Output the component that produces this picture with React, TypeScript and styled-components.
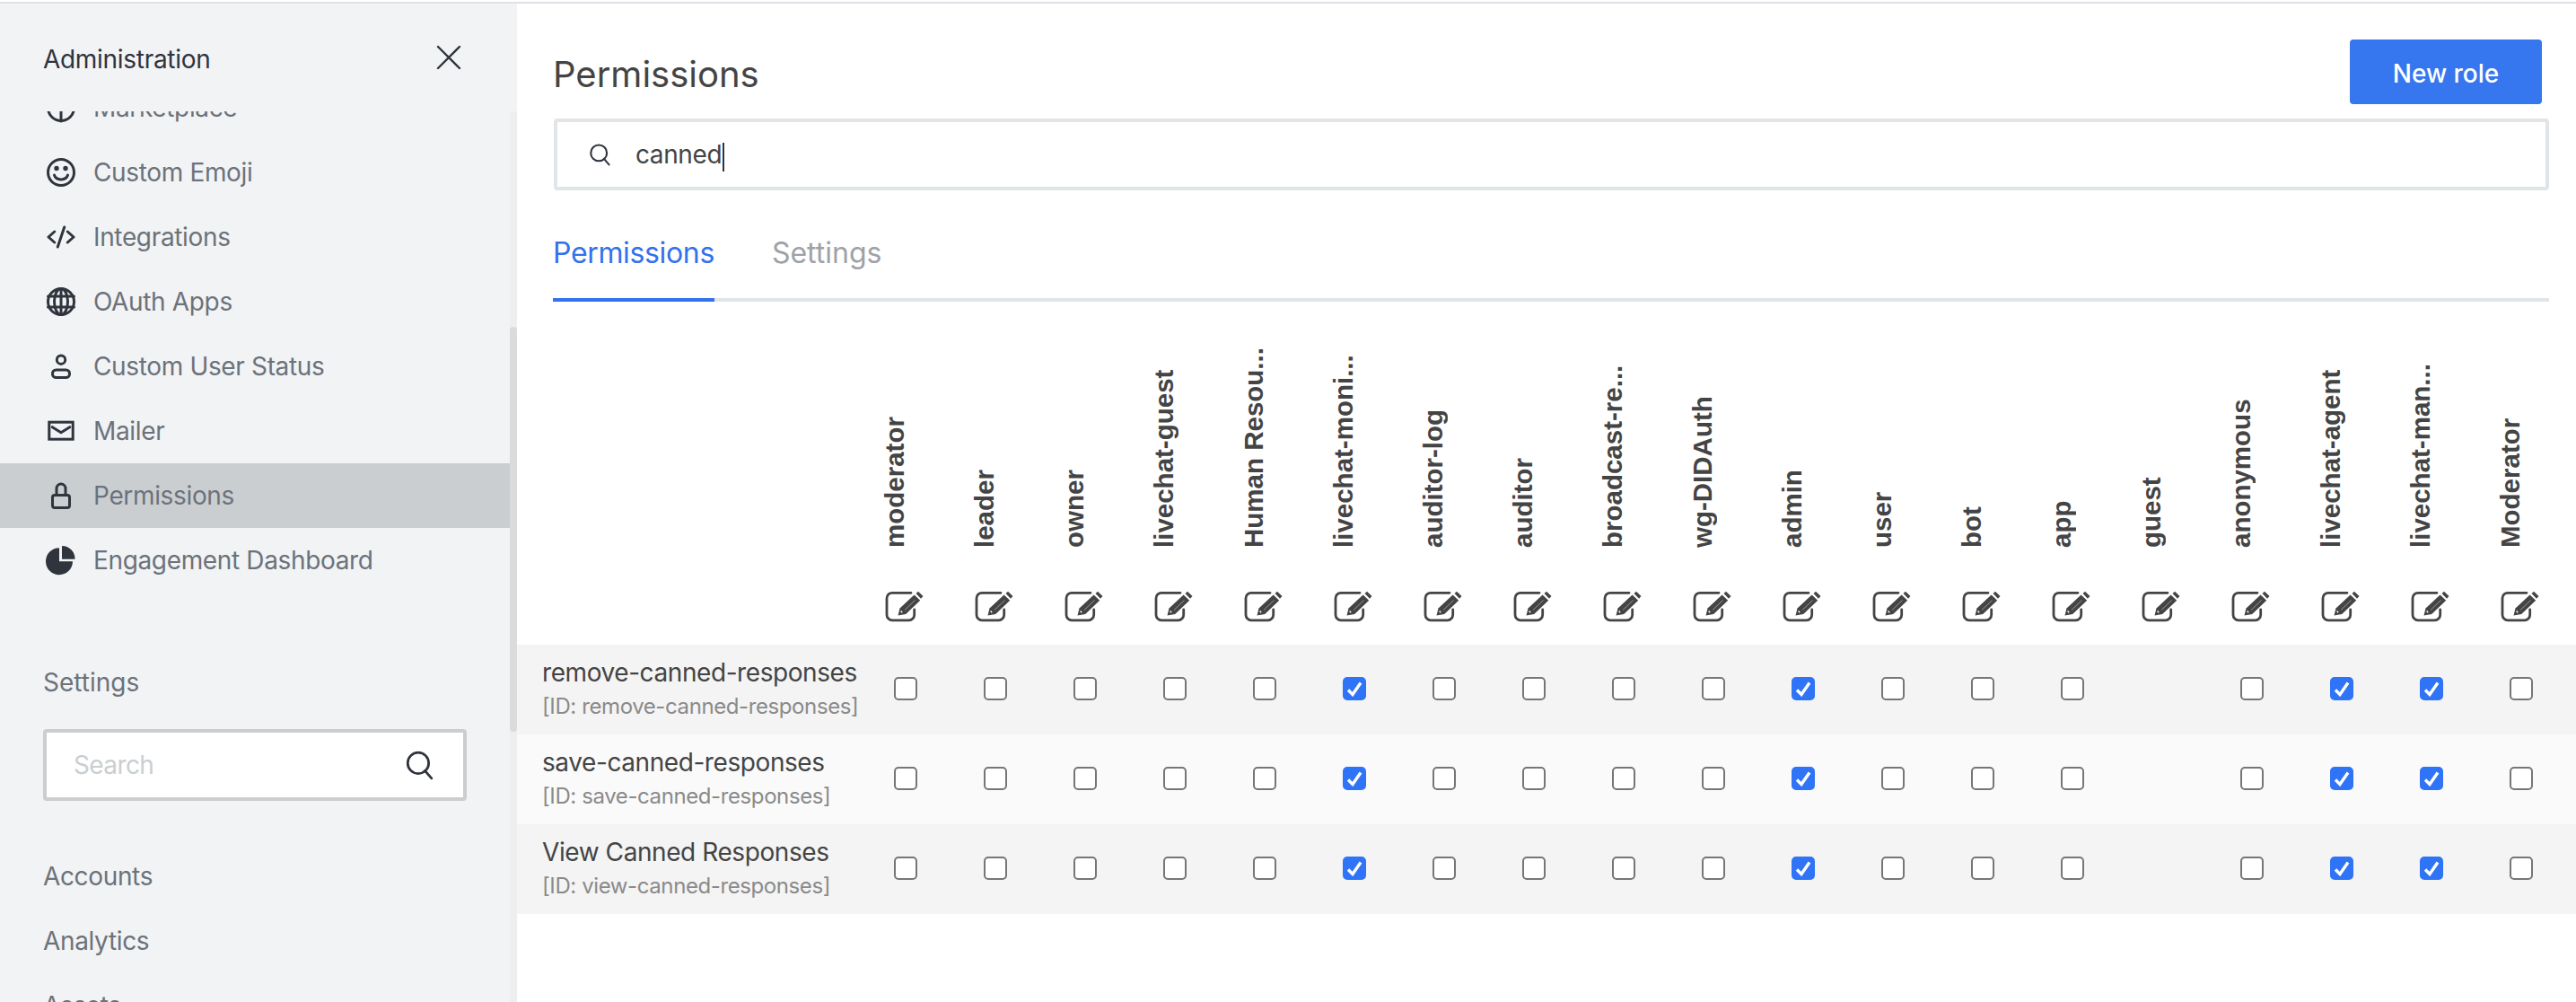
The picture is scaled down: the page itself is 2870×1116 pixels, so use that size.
import React from 'react'
import styled, { createGlobalStyle } from 'styled-components'

const GlobalStyle = createGlobalStyle`
  html, body {
    margin: 0;
    padding: 0;
    background: #fff;
    overflow: hidden;
  }
  * {
    box-sizing: border-box;
  }
`

const Page = styled.div`
  width: 2870px;
  height: 1116px;
  display: flex;
  flex-direction: column;
  overflow: hidden;
  padding-top: 2px;
  font-family: Inter, 'Liberation Sans', sans-serif;
`

const TopLine = styled.div`
  height: 2px;
  flex: none;
  background: #e0e0e6;
`

const Body = styled.div`
  flex: 1;
  min-height: 0;
  display: flex;
`

const Sidebar = styled.aside`
  width: 576px;
  flex: none;
  background: #f2f3f5;
  display: flex;
  flex-direction: column;
`

const SidebarHeader = styled.div`
  height: 120px;
  flex: none;
  padding: 4px 62px 0 48px;
  display: flex;
  align-items: center;
  justify-content: space-between;
  font-size: 28px;
  letter-spacing: -0.3px;
  color: #2f343d;

  svg {
    margin-top: -4px;
  }
`

const SidebarScroll = styled.div`
  flex: 1;
  min-height: 0;
  position: relative;
  overflow: hidden;
`

const SidebarContent = styled.div`
  margin-top: -40px;
  padding-right: 8px;
`

const Track = styled.div`
  position: absolute;
  top: 0;
  right: 0;
  bottom: 0;
  width: 8px;
  background: #eceef0;
`

const Thumb = styled.div`
  position: absolute;
  top: 240px;
  height: 451px;
  left: 0;
  right: 0;
  background: #d9dbdc;
  border-radius: 4px;
`

const NavRow = styled.div<{ $active?: boolean }>`
  height: 72px;
  display: flex;
  align-items: center;
  padding-left: 48px;
  gap: 17px;
  font-size: 28px;
  letter-spacing: -0.35px;
  color: #6c727a;
  background: ${(p) => (p.$active ? '#cbced1' : 'transparent')};
`

const NavIcon = styled.svg`
  width: 38px;
  height: 38px;
  flex: none;
  margin-left: 1px;
  fill: none;
  stroke: #2f343d;
  stroke-width: 3;
  stroke-linecap: round;
  stroke-linejoin: round;
`

const SectionLabel = styled.div`
  height: 40px;
  margin: 80px 0 32px 48px;
  display: flex;
  align-items: center;
  font-size: 28px;
  color: #6c727a;
`

const SideSearch = styled.div`
  width: 472px;
  height: 80px;
  margin: 0 0 48px 48px;
  padding: 0 32px 0 30px;
  display: flex;
  align-items: center;
  justify-content: space-between;
  background: #fff;
  border: 4px solid #cbced1;
  border-radius: 4px;
  font-size: 28px;
  letter-spacing: -0.6px;
  color: #cbced1;
`

const SettingsLink = styled.div`
  height: 72px;
  padding-left: 48px;
  display: flex;
  align-items: center;
  font-size: 28px;
  letter-spacing: -0.35px;
  color: #6c727a;
`

const Main = styled.main`
  flex: 1;
  min-width: 0;
  display: flex;
  flex-direction: column;
`

const Head = styled.div`
  height: 128px;
  flex: none;
  margin: 0 38px 0 40px;
  padding-top: 40px;
  display: flex;
  align-items: flex-start;
  justify-content: space-between;
`

const Title = styled.h1`
  margin: 0;
  padding-top: 15px;
  font-size: 40px;
  line-height: 48px;
  font-weight: 400;
  color: #444;
`

const PrimaryButton = styled.button`
  width: 214px;
  height: 72px;
  padding: 3px 0 0;
  border: 0;
  border-radius: 4px;
  background: #3676ee;
  color: #fff;
  font: 500 28px Inter, sans-serif;
`

const SearchField = styled.div`
  height: 80px;
  flex: none;
  margin: 0 30px 0 41px;
  padding: 0 34px;
  display: flex;
  align-items: center;
  gap: 27px;
  border: 4px solid #e1e5e8;
  border-radius: 4px;
  font-size: 28px;
  letter-spacing: -0.4px;
  color: #444;

  span {
    padding-top: 2px;
  }
`

const Caret = styled.span`
  display: inline-block;
  width: 2px;
  height: 32px;
  margin-left: 1px;
  padding: 0;
  vertical-align: middle;
  background: #2f343d;
`

const Tabs = styled.div`
  height: 120px;
  flex: none;
  margin: 4px 30px 0 40px;
  display: flex;
  gap: 64px;
  border-bottom: 4px solid #e1e5e8;
`

const Tab = styled.div<{ $active?: boolean }>`
  height: 120px;
  padding-top: 46px;
  font-size: 32px;
  line-height: 40px;
  letter-spacing: ${(p) => (p.$active ? '-0.35px' : '0')};
  color: ${(p) => (p.$active ? '#3371ed' : '#9ea2a8')};
  border-bottom: ${(p) => (p.$active ? '4px solid #3371ed' : '0')};
`

const Table = styled.div`
  flex: none;
  display: flex;
  flex-direction: column;
`

const HeaderRow = styled.div`
  height: 382px;
  display: flex;
`

const RoleColumn = styled.div`
  width: 100px;
  flex: none;
  display: flex;
  flex-direction: column;
  align-items: center;
`

const RoleLabel = styled.div`
  height: 274px;
  padding-left: 24px;
  display: flex;
  writing-mode: vertical-rl;
  transform: rotate(180deg);
  justify-content: flex-start;
  white-space: nowrap;
  font: 700 29.5px 'Liberation Sans', Arial, sans-serif;
  color: #444;
`

const EditIcon = styled.svg`
  width: 44px;
  height: 36px;
  margin-top: 48px;
  margin-left: -2px;
  flex: none;
`

const NameCell = styled.div`
  width: 383px;
  flex: none;
  padding-left: 28px;
  white-space: nowrap;
`

const Row = styled.div<{ $shade: string }>`
  height: 100px;
  display: flex;
  align-items: center;
  background: ${(p) => p.$shade};
`

const PermName = styled.div`
  font-size: 28px;
  line-height: 36px;
  letter-spacing: -0.42px;
  margin-top: -2px;
  color: #444;
`

const PermId = styled.div`
  font-size: 24px;
  line-height: 32px;
  letter-spacing: -0.4px;
  margin-top: 4px;
  color: #8a8a8a;
`

const CheckCell = styled.div`
  width: 100px;
  flex: none;
  margin-top: -3px;
  display: flex;
  justify-content: center;
`

const Box = styled.div<{ $checked?: boolean }>`
  width: 26px;
  height: 26px;
  border-radius: 5px;
  border: 2px solid ${(p) => (p.$checked ? '#2f74f7' : '#767676')};
  background: ${(p) => (p.$checked ? '#2f74f7' : '#fff')};
  display: flex;
  align-items: center;
  justify-content: center;
`

const roles = [
  'moderator',
  'leader',
  'owner',
  'livechat-guest',
  'Human Resou...',
  'livechat-moni...',
  'auditor-log',
  'auditor',
  'broadcast-re...',
  'wg-DIDAuth',
  'admin',
  'user',
  'bot',
  'app',
  'guest',
  'anonymous',
  'livechat-agent',
  'livechat-man...',
  'Moderator',
]

const checkedRoles = ['livechat-moni...', 'admin', 'livechat-agent', 'livechat-man...']

const permissions = [
  { name: 'remove-canned-responses', id: 'remove-canned-responses', shade: '#f4f4f4' },
  { name: 'save-canned-responses', id: 'save-canned-responses', shade: '#fafafa' },
  { name: 'View Canned Responses', id: 'view-canned-responses', shade: '#f4f4f4' },
]

const SearchGlyph = ({ size }: { size: number }) => (
  <svg width={size} height={size} viewBox="0 0 32 32" fill="none" stroke="#2f343d" strokeWidth="2.6">
    <circle cx="15" cy="14" r="11" />
    <path d="M22 22l7 8" strokeLinecap="round" />
  </svg>
)

const EditGlyph = () => (
  <EditIcon viewBox="0 0 44 36">
    <path
      d="M29 2.3H8a6 6 0 0 0-6 6v18.5a6 6 0 0 0 6 6h18.7a6 6 0 0 0 6-6v-6"
      fill="none"
      stroke="#444"
      strokeWidth="2.8"
      strokeLinecap="round"
    />
    <path d="M34.5 3l2.5-2.2 5.5 5.2-2.5 2.8z" fill="#444" />
    <path d="M32.6 4.5l6.6 6.2L23.2 26l-8.7 1.4 2-8z" fill="#444" />
    <path d="M19.2 24.2l-1.6-1.6" stroke="#fff" strokeWidth="1.4" fill="none" />
    <path d="M22 21.5L33.5 10.5" stroke="#bbb" strokeWidth="0.7" fill="none" />
  </EditIcon>
)

const navIcons: Record<string, React.ReactNode> = {
  market: (
    <>
      <circle cx="19" cy="19" r="14.5" />
      <path d="M19 4v30" />
    </>
  ),
  emoji: (
    <>
      <circle cx="19" cy="19" r="14.5" />
      <path d="M11.5 22c2 6.5 13 6.5 15 0" />
      <circle cx="14" cy="14.5" r="1.2" fill="#2f343d" />
      <circle cx="24" cy="14.5" r="1.2" fill="#2f343d" />
    </>
  ),
  code: <path d="M11.7 13L5 19l6.7 6M26.3 13l6.7 6-6.7 6M22.7 8l-7.4 22" />,
  globe: (
    <>
      <circle cx="19" cy="19" r="14.5" />
      <ellipse cx="19" cy="19" rx="7.5" ry="14.5" />
      <path d="M4.5 13h29M4.5 25h29M19 4.5v29" />
    </>
  ),
  user: (
    <>
      <circle cx="19" cy="11.7" r="4.7" />
      <rect x="9.5" y="23" width="19" height="8.5" rx="4" />
    </>
  ),
  mail: (
    <>
      <rect x="5.8" y="9.2" width="26.4" height="19" strokeLinejoin="miter" />
      <path d="M9.3 14.7l9.7 6 9.7-6" />
    </>
  ),
  lock: (
    <>
      <rect x="9.5" y="18.5" width="19" height="14" rx="2.5" />
      <path d="M14 18.5V11a5 5 0 0 1 10 0v7.5" />
    </>
  ),
  pie: (
    <>
      <path d="M17 5.2A15 15 0 1 0 32 20.3H17z" fill="#2f343d" stroke="none" />
      <path d="M20 3a14.5 14.5 0 0 1 14.5 14.7H20z" fill="#2f343d" stroke="none" />
    </>
  ),
}

const navItems = [
  { icon: 'market', label: 'Marketplace' },
  { icon: 'emoji', label: 'Custom Emoji' },
  { icon: 'code', label: 'Integrations' },
  { icon: 'globe', label: 'OAuth Apps' },
  { icon: 'user', label: 'Custom User Status' },
  { icon: 'mail', label: 'Mailer' },
  { icon: 'lock', label: 'Permissions', active: true },
  { icon: 'pie', label: 'Engagement Dashboard' },
]

export default function App() {
  return (
    <Page>
      <GlobalStyle />
      <TopLine />
      <Body>
        <Sidebar>
          <SidebarHeader>
            Administration
            <svg width="28" height="28" viewBox="0 0 28 28" stroke="#2f343d" strokeWidth="2.4" strokeLinecap="round">
              <path d="M2 2l24 24M26 2L2 26" />
            </svg>
          </SidebarHeader>
          <SidebarScroll>
            <SidebarContent>
              {navItems.map((item) => (
                <NavRow key={item.label} $active={item.active}>
                  <NavIcon viewBox="0 0 38 38">{navIcons[item.icon]}</NavIcon>
                  {item.label}
                </NavRow>
              ))}
              <SectionLabel>Settings</SectionLabel>
              <SideSearch>
                Search
                <SearchGlyph size={34} />
              </SideSearch>
              <SettingsLink>Accounts</SettingsLink>
              <SettingsLink>Analytics</SettingsLink>
              <SettingsLink>Assets</SettingsLink>
            </SidebarContent>
            <Track>
              <Thumb />
            </Track>
          </SidebarScroll>
        </Sidebar>
        <Main>
          <Head>
            <Title>Permissions</Title>
            <PrimaryButton>New role</PrimaryButton>
          </Head>
          <SearchField>
            <SearchGlyph size={26} />
            <span>
              canned
              <Caret />
            </span>
          </SearchField>
          <Tabs>
            <Tab $active>Permissions</Tab>
            <Tab>Settings</Tab>
          </Tabs>
          <Table>
            <HeaderRow>
              <NameCell />
              {roles.map((role, i) => (
                <RoleColumn key={i}>
                  <RoleLabel>{role}</RoleLabel>
                  <EditGlyph />
                </RoleColumn>
              ))}
            </HeaderRow>
            {permissions.map((perm) => (
              <Row key={perm.id} $shade={perm.shade}>
                <NameCell>
                  <PermName>{perm.name}</PermName>
                  <PermId>[ID: {perm.id}]</PermId>
                </NameCell>
                {roles.map((role, i) => (
                  <CheckCell key={i}>
                    {role !== 'guest' && (
                      <Box $checked={checkedRoles.includes(role)}>
                        {checkedRoles.includes(role) && (
                          <svg width="18" height="18" viewBox="0 0 18 18" fill="none" stroke="#fff" strokeWidth="3.4">
                            <path d="M2 10.5l5 5L16 2.5" />
                          </svg>
                        )}
                      </Box>
                    )}
                  </CheckCell>
                ))}
              </Row>
            ))}
          </Table>
        </Main>
      </Body>
    </Page>
  )
}
